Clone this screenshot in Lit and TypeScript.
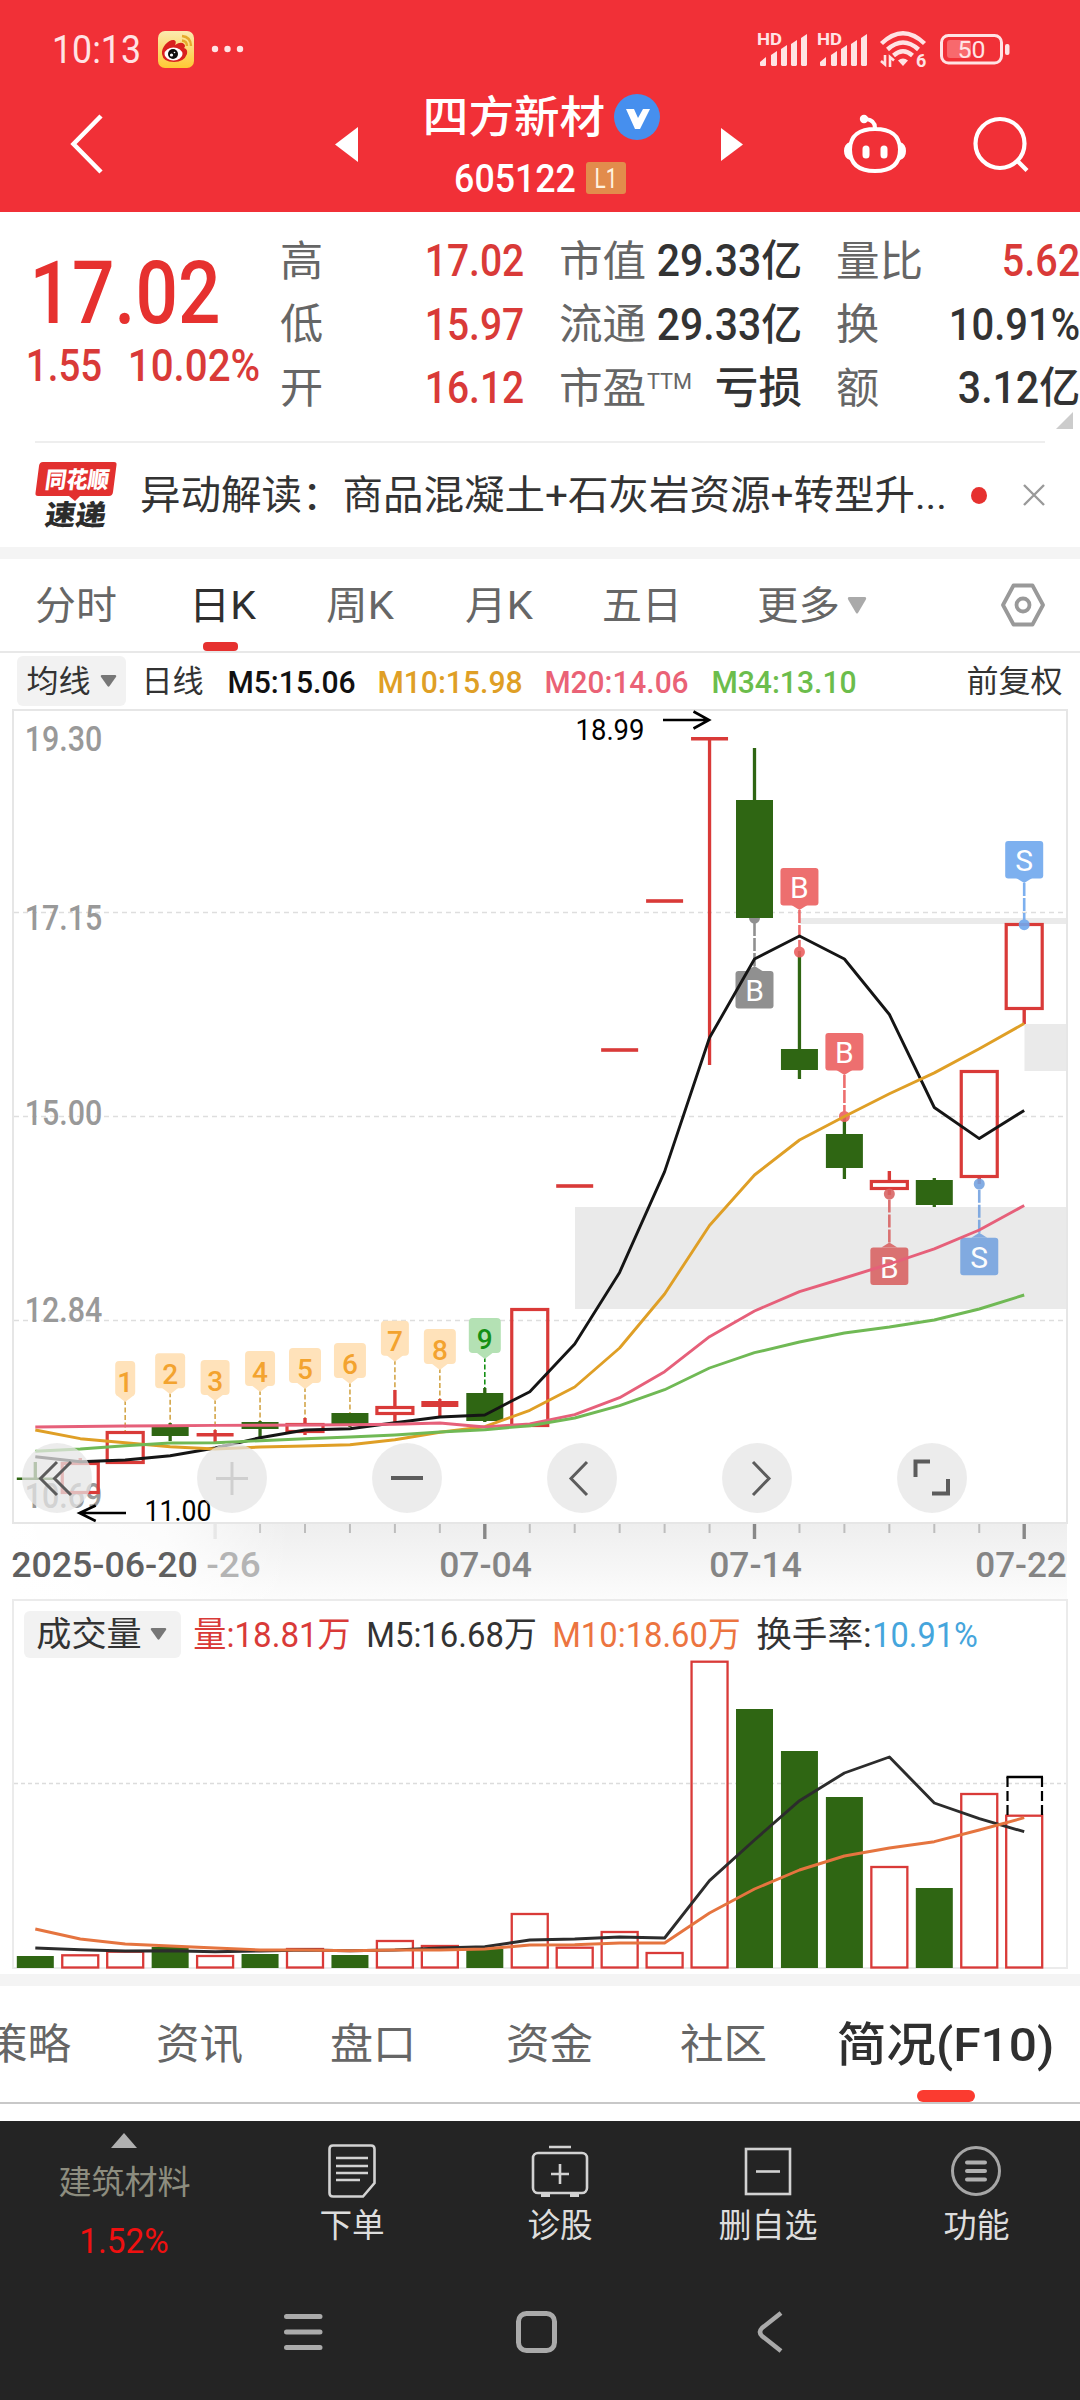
import { LitElement, html, svg, css } from "lit";
import { customElement } from "lit/decorators.js";

const CAP = 0.711;
const X = (i: number) => 35.3 + 44.95 * i;
const RED = "#d93a38";
const GREEN = "#2f6613";

/** Single-line label squeezed to a given ink width; the box is as tall as its capitals. */
const fit = (text: string, w: number, size: number, cls = "") => {
  const h = Math.round(size * CAP);
  return html`<svg class="fit ${cls}" width=${w} height=${h} style="font-size:${size}px">
    <text x=${-size * 0.05} y=${h} textLength=${w + size * 0.1} lengthAdjust="spacingAndGlyphs">${text}</text>
  </svg>`;
};

const label = (text: string, x: number, y: number, w: number, size: number, fill: string, cls = "") =>
  svg`<text class=${cls} x=${x - size * 0.05} y=${y} font-size=${size} fill=${fill}
    textLength=${w + size * 0.1} lengthAdjust="spacingAndGlyphs">${text}</text>`;

/** [kind, body top, body bottom, wick top, wick bottom] */
type Candle = [string, number, number, number, number];
const candles: Candle[] = [
  ["g", 1477.5, 1480, 1462, 1479], ["r", 1462, 1494, 1458, 1462], ["r", 1431, 1464, 1431, 1431],
  ["g", 1427, 1436, 1423, 1441], ["d", 1433, 1436.5, 1430, 1442], ["g", 1422, 1429, 1421, 1438],
  ["r", 1423, 1433, 1418, 1435], ["g", 1413, 1424, 1413, 1427], ["r", 1406, 1415, 1390, 1422],
  ["d", 1401, 1407, 1399, 1417], ["g", 1393, 1421, 1388, 1422], ["r", 1308, 1427, 1308, 1308],
  ["d", 1184.2, 1187.8, 1185, 1187], ["d", 1048.2, 1051.8, 1049, 1051], ["d", 899.2, 902.8, 900, 902],
  ["d", 737, 740.5, 739, 1065], ["g", 800, 918, 748, 918], ["g", 1049, 1070, 951, 1079],
  ["g", 1134, 1168, 1117, 1179], ["r", 1180, 1190, 1171, 1195], ["g", 1180, 1205, 1178, 1207],
  ["r", 1070, 1178, 1070, 1184], ["r", 923, 1010, 923, 1024],
];

const ma5 = [1456.7, 1461.7, 1460, 1455.7, 1448, 1437.7, 1430, 1428.7, 1422.7, 1417, 1415, 1391.7, 1344, 1272.4, 1171.6, 1037.8, 959, 936, 959, 1014.5, 1107.5, 1138.6, 1110.4];
const ma10 = [1430, 1438.7, 1442.7, 1446.7, 1449, 1447, 1446, 1444.7, 1439.7, 1432.3, 1426.7, 1410.3, 1387, 1348, 1294, 1225.5, 1175, 1140, 1116.5, 1093.7, 1072.9, 1048.8, 1023.5];
const ma20 = [1427, 1426.5, 1426, 1425.7, 1425.4, 1425.2, 1425, 1424.7, 1424.3, 1423, 1427, 1424, 1414.7, 1397.7, 1371.7, 1336.7, 1311, 1291.7, 1278, 1264, 1248.8, 1230, 1205.5];
const ma34 = [1451.3, 1449, 1445.7, 1443, 1442.7, 1440.7, 1438.7, 1437, 1435, 1432, 1429.7, 1425.7, 1418, 1405.7, 1389.7, 1368, 1352.7, 1342, 1333, 1327, 1320, 1309, 1295];

const volumes: [string, number][] = [
  ["g", 1956], ["r", 1955.3], ["r", 1951.7], ["g", 1947], ["r", 1956], ["g", 1954], ["r", 1949], ["g", 1955],
  ["r", 1941], ["r", 1946], ["g", 1949], ["r", 1914], ["r", 1947.7], ["r", 1932], ["r", 1953], ["r", 1661.7],
  ["g", 1709], ["g", 1751], ["g", 1797], ["r", 1867], ["g", 1888], ["r", 1794], ["r", 1815.7],
];
const vol5 = [1948, 1949.7, 1951, 1950.7, 1951.7, 1951, 1950, 1950.7, 1950, 1948, 1946.7, 1940, 1939, 1937, 1938, 1880.7, 1840, 1800.7, 1773, 1757, 1803, 1818.7, 1831.7];
const vol10 = [1929, 1939, 1944, 1946, 1948, 1950, 1950, 1950.7, 1950, 1950, 1949, 1945, 1944.7, 1943, 1943, 1913, 1889, 1870, 1856, 1848, 1841.7, 1830, 1817.7];

/** [digit, box top, box width, stem end] */
const counts: [number, number, number, number][] = [
  [1, 1361, 20, 1431], [2, 1353.3, 30, 1423], [3, 1360, 29, 1430], [4, 1351, 30, 1421], [5, 1348, 32, 1418],
  [6, 1343, 32, 1413], [7, 1320.7, 28, 1390], [8, 1329, 32, 1399], [9, 1318, 32, 1388],
];

/** [letter, candle index, box top, dot y, colour] */
const marks: [string, number, number, number, string][] = [
  ["B", 16, 971, 918, "#858585"], ["B", 17, 868, 952, "#ec6060"], ["B", 18, 1033, 1116.5, "#ec6060"],
  ["B", 19, 1247.5, 1194, "#d96464"], ["S", 21, 1237.7, 1184, "#76a4e0"], ["S", 22, 841, 924.7, "#70a8ee"],
];

const line = (ys: number[], stroke: string) =>
  svg`<polyline points=${ys.map((y, i) => `${X(i).toFixed(1)},${y}`).join(" ")} fill="none" stroke=${stroke} stroke-width="2.9" stroke-linejoin="round"/>`;

const candle = ([kind, top, bottom, hi, lo]: Candle, i: number) => {
  const x = X(i);
  const c = kind === "g" ? GREEN : RED;
  const hollow = kind === "r";
  return svg`
    ${hollow
      ? svg`${hi < top ? svg`<path d="M${x} ${hi}V${top}" stroke=${c} stroke-width="3.4"/>` : ""}
            ${lo > bottom ? svg`<path d="M${x} ${bottom}V${lo}" stroke=${c} stroke-width="3.4"/>` : ""}
            <rect x=${x - 18} y=${top + 1.5} width="36" height=${bottom - top - 3} fill="none" stroke=${c} stroke-width="3.2"/>`
      : svg`<path d="M${x} ${hi}V${lo}" stroke=${c} stroke-width="3.3"/>
            <rect x=${x - 18.5} y=${top} width="37" height=${bottom - top} fill=${c}/>`}`;
};

const count = ([n, top, w, end]: [number, number, number, number], k: number) => {
  const x = X(k + 2);
  const on = n === 9;
  const bg = on ? "#b4e1b4" : "#ffe2ba";
  return svg`
    <path d="M${x} ${top + 39}V${end}" stroke=${on ? "#149014" : "#d3a64a"} stroke-width="1.6" stroke-dasharray="5 2.5"/>
    <rect x=${x - w / 2} y=${top} width=${w} height="35" rx="4" fill=${bg}/>
    <path d="M${x - 9} ${top + 34}L${x} ${top + 41}L${x + 9} ${top + 34}Z" fill=${bg}/>
    <text class="mid med" x=${x} y=${top + 30.5} font-size="28" fill=${on ? "#149014" : "#f3a32f"}>${n}</text>`;
};

const mark = ([t, i, top, dot, c]: [string, number, number, number, string]) => {
  const x = X(i);
  const above = top < dot;
  const edge = above ? top + 37 : top;
  const tip = above ? edge + 5 : edge - 5;
  return svg`<g opacity="0.9">
    <path d="M${x} ${tip}V${dot}" stroke=${c} stroke-width="2.6" stroke-dasharray="13 2"/>
    <circle cx=${x} cy=${dot} r="5.5" fill=${c}/>
    <rect x=${x - 19} y=${top} width="38" height="37.5" rx="3" fill=${c}/>
    <path d="M${x - 8} ${edge}L${x} ${tip}L${x + 8} ${edge}Z" fill=${c}/>
    <text class="mid" x=${x} y=${top + 30} font-size="30" fill="#fff">${t}</text></g>`;
};

const signal = () => html`<svg width="50" height="34" viewBox="0 0 50 34" class="sig">
  <text x="-1" y="13" font-size="16" class="bold" textLength="25" lengthAdjust="spacingAndGlyphs">HD</text>
  <path d="M2 33v-3l6-5v8a1 1 0 0 1-1 1H3a1 1 0 0 1-1-1zM13 33V23l6-4v14l-1 1h-4zM23 33V17l6-4v20l-1 1h-4zM33 33V12l6-4v25l-1 1h-4zM43 33V6l6-4v31l-1 1h-4z"/></svg>`;

@customElement("app-root")
export class AppRoot extends LitElement {
  static styles = css`
    :host { display: block; width: 1080px; height: 2400px; overflow: hidden; background: #fff; color: #333;
      font-family: Roboto, "Noto Sans CJK SC", sans-serif; }
    * { box-sizing: border-box; }
    svg { display: block; flex: none; }
    .fit { overflow: visible; fill: currentColor; }
    .fit text, svg text { white-space: pre; }
    .med { font-weight: 500; }
    .bold { font-weight: 700; }
    .mid { text-anchor: middle; }
    .row { display: flex; align-items: center; }
    .grow { flex: 1; }
    .head { height: 212px; background: #f13037; color: #fff; }
    .status { height: 86px; padding: 12px 70px 0 54px; color: #ffe3e4; }
    .weibo { margin-left: 19px; }
    .dots { margin-left: 17px; }
    .sig { fill: #ffe3e4; margin-right: 10px; overflow: visible; }
    .wifi { margin-left: 2px; overflow: visible; }
    .batt { margin-left: 12px; }
    .nav { height: 116px; padding: 0 51px 0 70px; }
    .tri-l { margin-left: 232px; }
    .name { width: 363px; padding-bottom: 0; display: flex; flex-direction: column; align-items: center; gap: 22px; }
    .name .row { gap: 12px; }
    .name .first { height: 46px; margin-left: 5px; gap: 11px; }
    .code { margin-left: 2px; }
    .level { background: #e28c4c; border-radius: 3px; width: 40px; height: 32px; display: grid; place-items: center; color: #fff3e0; }
    .robot { margin-left: 99px; }
    .search { margin-left: 65px; }
    .quote { height: 229px; display: grid; grid-template-columns: 211px 242px 240px 242px; column-gap: 36px; padding-left: 28px; position: relative; }
    .main { color: #e6312f; padding: 48px 0 0 6px; grid-column: 1; width: 236px; }
    .chg { gap: 30px; margin: 27px 0 0 -6px; color: #d93a38; }
    .col { display: grid; grid-template-rows: repeat(3, 63.5px); padding-top: 17px; }
    .col .row { justify-content: space-between; }
    .key { color: #666; }
    .up { color: #d93a38; }
    .c1 { margin-left: 7px; width: 240px; }
    .c2 { width: 239px; margin-left: 8px; }
    .c3 { margin-left: 9px; width: 240px; }
    .ttm { align-self: flex-start; margin: 17px auto 0 4px; }
    .corner { position: absolute; right: 7px; bottom: 12px; }
    .rule { height: 2px; margin: 0 35px; background: #eee; }
    .news { height: 104px; padding: 0 35px; }
    .news .txt { margin: 0 26px 0 25px; }
    .dot { width: 17px; height: 17px; border-radius: 50%; background: #e6312f; margin-right: 36px; }
    .band { height: 12px; background: #f4f4f4; }
    .tabs { height: 94px; border-bottom: 2px solid #e8e8e8; padding: 0 35px 0 37px; color: #666; }
    .on { color: #2f2f2f; position: relative; height: 92px; display: flex; align-items: center; }
    .on i { position: absolute; bottom: 0; left: 12px; width: 35px; height: 9px; border-radius: 4px; background: #e6312f; }
    .ma { height: 56px; padding-left: 17px; }
    .chip { background: #f2f2f2; border-radius: 6px; display: flex; align-items: center; }
    .ma .chip { width: 109px; height: 50px; padding-left: 11px; gap: 11px; margin-right: 17px; }
    .chart { position: relative; height: 890px; }
    .tools { position: absolute; left: 22px; top: 734px; display: flex; gap: 105px; }
    .btn { width: 70px; height: 70px; border-radius: 50%; background: rgba(229, 229, 229, .74); display: grid; place-items: center; }
    .vol { margin: 0 12px; height: 370px; border: 2px solid #ebebeb; }
    .vol-top { height: 60px; padding: 6px 0 0 10px; }
    .vol .chip { width: 157px; height: 47px; padding-left: 14px; gap: 10px; margin-right: 14px; }
    .vol .canvas { overflow: visible; }
    .after { height: 5px; }
    .sections { height: 118px; border-bottom: 2px solid #c8c8c8; color: #666; padding-right: 28px; overflow: hidden; }
    .sections .on { height: 116px; color: #2f2f2f; }
    .sections .on i { left: 78px; width: 58px; height: 12px; border-radius: 6px; background: #fb3b30; }
    .strip { height: 17px; }
    .dock { height: 279px; background: #242424; }
    .items { height: 130px; display: grid; grid-template-columns: 248px repeat(4, 208px); }
    .item { display: flex; flex-direction: column; align-items: center; justify-content: flex-start; color: #ddd; padding-top: 23px; gap: 16px; }
    .item .ico { height: 54px; display: grid; place-items: center; }
    .sector { padding-top: 12px; color: #8d8d7f; gap: 23px; }
    .sector .hot { color: #f01010; margin-top: 11px; }
    .sys { height: 124px; margin-top: 19px; padding: 0 297px 0 284px; justify-content: space-between; }
    .home { margin-right: 8px; }
  `;

  caret(w: number, h: number, fill: string) {
    return html`<svg width=${w} height=${h} viewBox="0 0 16 12" preserveAspectRatio="none"><path d="M2 0h12q2 0 1 2L9 11q-1 1.500-2 0L1 2Q0 0 2 0z" fill=${fill}/></svg>`;
  }

  renderHead() {
    return html`<header class="head">
      <div class="status row">
        ${fit("10:13", 85, 39)}
        <svg class="weibo" width="36" height="37" viewBox="0 0 36 37">
          <defs><linearGradient id="wb" x1="0" y1="0" x2="0" y2="1"><stop offset="0" stop-color="#fbeab0"/><stop offset="1" stop-color="#ffc933"/></linearGradient></defs>
          <rect width="36" height="37" rx="7" fill="url(#wb)"/>
          <path d="M4 23C3 16 11 8 16 9q3 1 1 5 6-4 9-1 2 2 0 4 4 1 3 6-3 8-13 8Q5 31 4 23z" fill="#d9201f"/>
          <ellipse cx="15.500" cy="23" rx="9" ry="6.500" fill="#fff"/><circle cx="15" cy="23" r="5" fill="#111"/><circle cx="13.500" cy="24" r="1.600" fill="#fff"/><circle cx="16.500" cy="21.500" r=".8" fill="#fff"/>
          <path d="M24 5q9 1 9 10M24 9.500q5 .5 5 5.500" fill="none" stroke="#e6a92c" stroke-width="2.400"/>
        </svg>
        <svg class="dots" width="33" height="8" fill="#ffe3e4"><circle cx="4" cy="4" r="3.200"/><circle cx="16.500" cy="4" r="3.200"/><circle cx="29" cy="4" r="3.200"/></svg>
        <span class="grow"></span>
        ${signal()}${signal()}
        <svg class="wifi" width="48" height="36" viewBox="0 0 48 36" fill="none" stroke="#ffe3e4" stroke-width="4.400">
          <path d="M1.500 12.500Q23 -8 44.500 12.500M7.500 18.500Q23 4.500 38.500 18.500M13.500 24.500Q23 16 32.500 24.500"/>
          <path d="M18 29.500q5-4 10 0l-5 5.500z" fill="#ffe3e4" stroke="none"/>
          <path d="M5 24v9.500L1 30M10 36V26l4 3.500" stroke-width="2.600"/>
          <text x="36" y="36" font-size="18" class="bold" fill="#ffe3e4" stroke="none">6</text>
        </svg>
        <svg class="batt" width="70" height="31" viewBox="0 0 70 31">
          <rect x="1.500" y="1.500" width="60" height="27.500" rx="7" fill="none" stroke="#ffe3e4" stroke-width="3"/>
          <rect x="7" y="6" width="24" height="18" rx="3" fill="#f8696d"/>
          <rect x="65" y="10" width="4.500" height="11" rx="2" fill="#ffe3e4"/>
          <text x="17.500" y="24" font-size="24" fill="#ffe3e4" textLength="28" lengthAdjust="spacingAndGlyphs">50</text>
        </svg>
      </div>
      <div class="nav row">
        <svg width="33" height="60" viewBox="0 0 33 60"><path d="M31 2L3.500 30L31 58" fill="none" stroke="#fff" stroke-width="4.500"/></svg>
        <svg class="tri-l" width="23" height="35"><path d="M23 0v35L0 17.500z" fill="#fff"/></svg>
        <div class="name">
          <div class="row first">${fit("四方新材", 178, 44.5, "med")}
            <svg width="46" height="46" viewBox="0 0 46 46"><circle cx="23" cy="23" r="23" fill="#468fee"/><path d="M12 15h8l4 9 5-9h7L26 35h-5z" fill="#fff"/></svg>
          </div>
          <div class="row code">${fit("605122", 118, 38, "med")}
            <span class="level">${fit("L1", 20, 28)}</span></div>
        </div>
        <svg width="22" height="33"><path d="M0 0v33l22-16.500z" fill="#fff"/></svg>
        <svg class="robot" width="66" height="60" viewBox="0 0 66 60" fill="none" stroke="#fff" stroke-width="4">
          <path d="M33 15C48 15 58 21 58 35.500S49 57 33 57 8 50 8 35.500 18 15 33 15zM33 14q0-8-9-9"/>
          <circle cx="22" cy="5" r="4.200" fill="#fff" stroke="none"/>
          <path d="M8 28q-6 2-6 9t6 9zM58 28q6 2 6 9t-6 9z" fill="#fff" stroke="none"/>
          <path d="M24 35v6M42 35v6" stroke-width="7" stroke-linecap="round"/>
        </svg>
        <svg class="search" width="56" height="56" viewBox="0 0 56 56" fill="none" stroke="#fff" stroke-width="4.200"><circle cx="27" cy="27.500" r="24.500"/><path d="M44 44.500l10 10"/></svg>
      </div>
    </header>`;
  }

  renderQuote() {
    const row = (k: unknown, v: unknown) => html`<div class="row">${k}${v}</div>`;
    return html`<section class="quote">
      <div class="main">${fit("17.02", 182, 88, "med")}
        <div class="row chg">${fit("1.55", 72, 43.5, "med")}${fit("10.02%", 128, 43.5, "med")}</div>
      </div>
      <div class="col c1">
        ${row(fit("高", 39, 42, "key"), fit("17.02", 95, 43.5, "med up"))}
        ${row(fit("低", 39, 42, "key"), fit("15.97", 95, 43.5, "med up"))}
        ${row(fit("开", 39, 42, "key"), fit("16.12", 95, 43.5, "med up"))}
      </div>
      <div class="col c2">
        ${row(fit("市值", 83, 42, "key"), fit("29.33亿", 141, 43.5, "med"))}
        ${row(fit("流通", 83, 42, "key"), fit("29.33亿", 141, 43.5, "med"))}
        ${row(html`${fit("市盈", 83, 42, "key")}${fit("TTM", 43, 22, "key ttm")}`, fit("亏损", 83, 43, "med"))}
      </div>
      <div class="col c3">
        ${row(fit("量比", 83, 42, "key"), fit("5.62", 74, 43.5, "med up"))}
        ${row(fit("换", 39, 42, "key"), fit("10.91%", 127, 43.5, "med"))}
        ${row(fit("额", 39, 42, "key"), fit("3.12亿", 118, 43.5, "med"))}
      </div>
      <svg class="corner" width="17" height="17"><path d="M17 0v17H0z" fill="#ccc"/></svg>
    </section>
    <div class="rule"></div>
    <section class="news row">
      <svg width="82" height="68" viewBox="0 0 82 68">
        <path d="M8 1h71q3 0 2.500 3L78 31q-.5 4-4 4H45l-5 5-6-5H3q-3 0-2.500-3L4 5q.5-4 4-4z" fill="#e2302f"/>
        <text transform="skewX(-8)" x="13" y="27" font-size="23" fill="#fff" font-weight="900" textLength="64" lengthAdjust="spacingAndGlyphs">同花顺</text>
        <text transform="skewX(-8)" x="18" y="64" font-size="28" fill="#2c2c2c" font-weight="900" textLength="61" lengthAdjust="spacingAndGlyphs">速递</text>
      </svg>
      <span class="txt">${fit("异动解读：商品混凝土+石灰岩资源+转型升...", 803, 39.5)}</span>
      <span class="dot"></span>
      <svg width="22" height="22"><path d="M1 1l20 20M21 1L1 21" stroke="#999" stroke-width="2.400"/></svg>
    </section>`;
  }

  renderChart() {
    return html`<section class="chart">
      <svg width="1080" height="891" viewBox="0 709 1080 891">
        <defs>
          <linearGradient id="ax" x1="0" y1="0" x2="0" y2="1"><stop offset="0" stop-color="#eee"/><stop offset="1" stop-color="#fcfcfc"/></linearGradient>
          <linearGradient id="fade" x1="0" x2="1"><stop offset="0" stop-color="#fff"/><stop offset=".55" stop-color="#fff" stop-opacity=".8"/><stop offset="1" stop-color="#fff" stop-opacity="0"/></linearGradient>
        </defs>
        <rect x="12" y="1524" width="1055" height="75" fill="url(#ax)"/>
        ${[912.5, 1116.5, 1320.5].map((y) => svg`<path d="M14 ${y}H1066" stroke="#dedede" stroke-width="1.500" stroke-dasharray="5 4"/>`)}
        <rect x="799.500" y="918" width="267" height="6" fill="#eaeaea"/>
        <rect x="1024.500" y="1024" width="42" height="47" fill="#eaeaea"/>
        <rect x="575" y="1207" width="492" height="102" fill="#eaeaea"/>
        <rect x="13" y="710" width="1054" height="813" fill="none" stroke="#e6e6e6" stroke-width="2"/>
        ${([["19.30", 751], ["17.15", 930], ["15.00", 1125], ["12.84", 1321.5], ["10.69", 1508]] as [string, number][]).map(([t, y]) => label(t, 26.5, y, 74, 35.5, "#999", "med"))}
        ${marks.filter((m) => m[1] === 16).map(mark)}
        ${candles.map(candle)}
        ${marks.filter((m) => m[1] !== 16).map(mark)}
        ${counts.map(count)}
        ${line(ma5, "#151515")}${line(ma10, "#df9f26")}${line(ma20, "#e6607a")}${line(ma34, "#70b955")}
        ${label("18.99", 577, 739.5, 66, 30, "#000")}
        <path d="M663 720H708M693.500 711.500L709 720L693.500 728.500" fill="none" stroke="#000" stroke-width="2.600"/>
        ${label("11.00", 146, 1521, 64, 29, "#000")}
        <path d="M126 1513H80M95.700 1505.500L79.500 1513L95.700 1521" fill="none" stroke="#000" stroke-width="2.600"/>
        ${candles.map((_, i) => (i < 4 ? "" : i % 6 === 4
          ? svg`<path d="M${X(i)} 1524V1539" stroke=${i === 4 ? "#d2d2d2" : "#888"} stroke-width="3.400"/>`
          : svg`<path d="M${X(i)} 1524V1533" stroke="#bdbdbd" stroke-width="2"/>`))}
        <rect x="10" y="1524" width="280" height="75" fill="url(#fade)"/>
        ${label("2025-06-20", 13, 1576.5, 183, 35.5, "#606060", "med")}
        ${label("-26", 208, 1576.5, 51, 35.5, "#b4b4b4", "med")}
        ${label("07-04", 441, 1576.5, 89, 35.5, "#858585", "med")}
        ${label("07-14", 711, 1576.5, 89, 35.5, "#858585", "med")}
        ${label("07-22", 977, 1576.5, 88, 35.5, "#858585", "med")}
      </svg>
      <div class="tools">
        ${[
          svg`<path d="M35 19L18.500 35.500L35 52M49 19L32.500 35.500L49 52"/>`,
          svg`<path d="M35 19v33M19 35.500h32" stroke="#cfcfcf"/>`,
          svg`<path d="M19 35h32" stroke-width="4"/>`,
          svg`<path d="M40 19L24 35.500L40 52"/>`,
          svg`<path d="M31 19L47 35.500L31 52"/>`,
          svg`<path d="M18.500 34V18.500H33M35 50.500H51V36" stroke-width="4"/>`,
        ].map((d) => html`<span class="btn"><svg width="70" height="70" fill="none" stroke="#5c5c5c" stroke-width="3">${d}</svg></span>`)}
      </div>
    </section>`;
  }

  renderVolume() {
    return html`<section class="vol">
      <div class="vol-top row">
        <span class="chip">${fit("成交量", 102, 34)}${this.caret(17, 12, "#777")}</span>
        ${fit("量:18.81万", 154, 35, "up")}<span style="width:19px"></span>
        ${fit("M5:16.68万", 167, 35)}<span style="width:19px"></span>
        <span style="color:#ec7440">${fit("M10:18.60万", 185, 35)}</span><span style="width:19px"></span>
        ${fit("换手率:", 112, 35)}<span style="width:4px"></span>
        <span style="color:#45a5dc">${fit("10.91%", 102, 35)}</span>
      </div>
      <svg class="canvas" width="1052" height="306" viewBox="14 1661 1052 306">
        <path d="M14 1783.500H1066" stroke="#dcdcdc" stroke-width="1.500" stroke-dasharray="4 3"/>
        ${volumes.map(([k, y], i) => k === "g"
          ? svg`<rect x=${X(i) - 18.5} y=${y} width="37" height=${1968 - y} fill=${GREEN}/>`
          : svg`<rect x=${X(i) - 18} y=${y} width="36" height=${1967.5 - y} fill="none" stroke=${RED} stroke-width="2.300"/>`)}
        <path d="M1007.500 1815V1777M1042 1777V1815" fill="none" stroke="#000" stroke-width="2.200" stroke-dasharray="10 4"/>
        <path d="M1006.500 1777H1043" stroke="#000" stroke-width="2.400"/>
        ${line(vol5, "#2c2c2c")}${line(vol10, "#e5743f")}
      </svg>
    </section><div class="after"></div>`;
  }

  renderDock() {
    const item = (ico: unknown, t: string, w: number) => html`<div class="item">
      <span class="ico"><svg width="58" height="54" viewBox="-29 -27 58 54" fill="none" stroke="#d2d2d2" stroke-width="2.600">${ico}</svg></span>${fit(t, w, 32.5)}</div>`;
    return html`<footer class="dock">
      <div class="items">
        <div class="item sector">
          <svg width="26" height="15"><path d="M13 0l13 15H0z" fill="#b0b0b0"/></svg>
          ${fit("建筑材料", 129, 32.5)}${fit("1.52%", 86, 35, "hot")}
        </div>
        ${item(svg`<path d="M-19-25.500H19Q22.500-25.500 22.500-22V12L11 25.500H-19Q-22.500 25.500-22.500 22V-22Q-22.500-25.500-19-25.500zM-16-13H16M-16-5H16M-16 2H16M-16 9H8"/>`, "下单", 62)}
        ${item(svg`<rect x="-27" y="-18" width="54" height="40" rx="5"/><path d="M-11-24H11M-9 3H9M0-7V13"/><path d="M-19 24H-10M10 24H19" stroke-width="4"/>`, "诊股", 62)}
        ${item(svg`<rect x="-22" y="-22" width="44" height="45"/><path d="M-12 .5H12"/>`, "删自选", 96)}
        ${item(svg`<circle r="23.500" stroke="#a6a6a6" stroke-width="3"/><path d="M-9-8.500H9M-9 0H9M-9 8.500H9" stroke="#b0b0b0" stroke-width="4" stroke-linecap="round"/>`, "功能", 63)}
      </div>
      <div class="sys row">
        <svg width="39" height="36" fill="none" stroke="#aaa" stroke-width="5" stroke-linecap="round"><path d="M2.500 2.500H36M2.500 18H36M2.500 33.500H36"/></svg>
        <svg class="home" width="41" height="42"><rect x="2.500" y="2.500" width="36" height="37" rx="8" fill="none" stroke="#aaa" stroke-width="5"/></svg>
        <svg width="26" height="42"><path d="M24 2L5 17Q1 21 5 25L24 40" fill="none" stroke="#aaa" stroke-width="4.500"/></svg>
      </div>
    </footer>`;
  }

  render() {
    const gap = (w: number) => html`<span style="width:${w}px"></span>`;
    return html`
      ${this.renderHead()}
      ${this.renderQuote()}
      <div class="band"></div>
      <nav class="tabs row">
        ${fit("分时", 78, 39)}${gap(76)}
        <span class="on">${fit("日K", 63, 39)}<i></i></span>${gap(74)}
        ${fit("周K", 64, 39)}${gap(75)}${fit("月K", 64, 39)}${gap(73)}${fit("五日", 76, 39)}${gap(79)}
        ${fit("更多", 79, 39)}${gap(9)}${this.caret(20, 17, "#aaa")}<span class="grow"></span>
        <svg width="44" height="44" viewBox="0 0 44 44" fill="none" stroke="#999" stroke-width="3.800" stroke-linejoin="round"><path d="M12.500 2.500H31.500L42 22L31.500 41.500H12.500L2 22z"/><circle cx="22" cy="22" r="6.500"/></svg>
      </nav>
      <div class="ma row">
        <span class="chip">${fit("均线", 61, 31)}${this.caret(17, 12, "#777")}</span>
        ${fit("日线", 59, 31)}${gap(27)}
        <span style="color:#111">${fit("M5:15.06", 125, 32, "med")}</span>${gap(25)}
        <span style="color:#df9f26">${fit("M10:15.98", 142, 32, "med")}</span>${gap(25)}
        <span style="color:#ea6276">${fit("M20:14.06", 141, 32, "med")}</span>${gap(26)}
        <span style="color:#6cbd4c">${fit("M34:13.10", 142, 32, "med")}</span>${gap(113)}
        ${fit("前复权", 93, 31)}
      </div>
      ${this.renderChart()}
      ${this.renderVolume()}
      <div class="band"></div>
      <nav class="sections row">
        <span style="margin-left:-14px">${fit("策略", 83, 41.5)}</span>${gap(89)}
        ${fit("资讯", 83, 41.5)}${gap(91)}${fit("盘口", 82, 41.5)}${gap(94)}${fit("资金", 83, 41.5)}${gap(91)}${fit("社区", 83, 41.5)}${gap(74)}
        <span class="on">${fit("简况(F10)", 213, 47, "med")}<i></i></span>
      </nav>
      <div class="strip"></div>
      ${this.renderDock()}`;
  }
}
